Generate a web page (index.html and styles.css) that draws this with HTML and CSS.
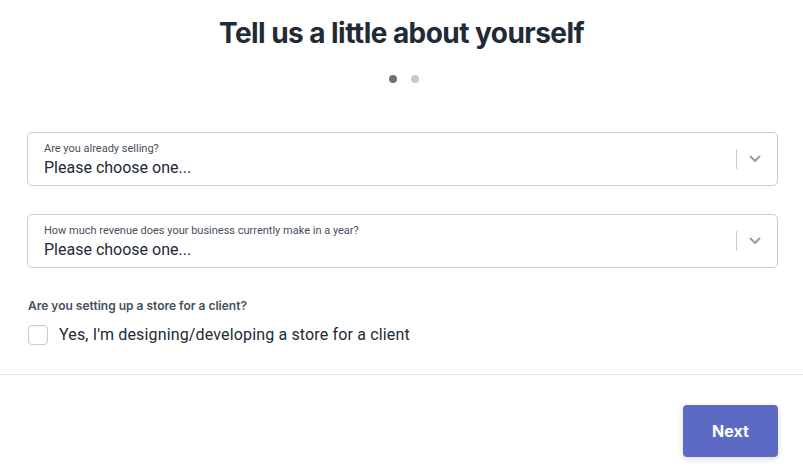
FILE: index.html
```html
<!DOCTYPE html>
<html lang="en">
<head>
<meta charset="utf-8">
<title>Tell us a little about yourself</title>
<link rel="stylesheet" href="styles.css">
</head>
<body>
<div class="page">
  <header class="head">
    <h1 class="title">Tell us a little about yourself</h1>
    <div class="dots"><span class="dot dot-active"></span><span class="dot"></span></div>
  </header>
  <form class="form">
    <div class="select">
      <div class="select-text">
        <span class="select-label">Are you already selling?</span>
        <span class="select-value">Please choose one...</span>
      </div>
      <div class="select-arrow">
        <span class="sep"></span>
        <svg class="chev" width="12" height="8" viewBox="0 0 12 8"><path d="M1.5 1.5 L6 6 L10.5 1.5" fill="none" stroke="#919eab" stroke-width="2" stroke-linecap="round" stroke-linejoin="round"/></svg>
      </div>
    </div>
    <div class="select">
      <div class="select-text">
        <span class="select-label">How much revenue does your business currently make in a year?</span>
        <span class="select-value">Please choose one...</span>
      </div>
      <div class="select-arrow">
        <span class="sep"></span>
        <svg class="chev" width="12" height="8" viewBox="0 0 12 8"><path d="M1.5 1.5 L6 6 L10.5 1.5" fill="none" stroke="#919eab" stroke-width="2" stroke-linecap="round" stroke-linejoin="round"/></svg>
      </div>
    </div>
    <div class="client">
      <div class="client-q">Are you setting up a store for a client?</div>
      <label class="check">
        <span class="box"></span>
        <span class="check-text">Yes, I'm designing/developing a store for a client</span>
      </label>
    </div>
  </form>
  <footer class="foot">
    <button class="next" type="button">Next</button>
  </footer>
</div>
</body>
</html>
```
FILE: styles.css
```css
* { box-sizing: border-box; }
html, body { margin: 0; padding: 0; background: #fff; }
body {
  font-family: Roboto, "Liberation Sans", Arial, sans-serif;
  color: #212b36;
}
.page { width: 803px; }
.head {
  display: flex;
  flex-direction: column;
  align-items: center;
  padding-top: 15px;
}
.title {
  margin: 0;
  font-family: Inter, "Liberation Sans", sans-serif;
  font-size: 28px;
  line-height: 36px;
  font-weight: 700;
  letter-spacing: -0.55px;
  color: #212b36;
}
.dots {
  display: flex;
  gap: 14px;
  margin-top: 24px;
  margin-left: 4px;
}
.dot {
  width: 8px;
  height: 8px;
  border-radius: 50%;
  background: #c9c9c9;
}
.dot-active { background: #707070; }
.form {
  padding: 49px 25px 0 27px;
  display: flex;
  flex-direction: column;
}
.select {
  height: 54px;
  border: 1px solid #c4cdd5;
  border-radius: 5px;
  display: flex;
  align-items: center;
  margin-bottom: 28px;
}
.select-text {
  flex: 1;
  display: flex;
  flex-direction: column;
  padding-left: 16px;
  padding-top: 2px;
}
.select-label {
  font-size: 11px;
  line-height: 14px;
  color: #454f5b;
}
.select-value {
  font-size: 16px;
  line-height: 21px;
  margin-top: 1px;
  color: #212b36;
}
.select-arrow {
  display: flex;
  align-items: center;
  padding-right: 16px;
}
.sep {
  width: 1px;
  height: 20px;
  background: #c4cdd5;
  margin-right: 12px;
}
.chev { display: block; }
.client { margin-top: 3px; }
.client-q {
  font-family: Inter, "Liberation Sans", sans-serif;
  font-size: 12px;
  font-weight: 600;
  line-height: 16px;
  color: #454f5b;
  margin-left: 1px;
  margin-top: -1px;
}
.check {
  display: flex;
  align-items: center;
  gap: 11px;
  margin-top: 11px;
  margin-left: 1px;
}
.box {
  width: 20px;
  height: 20px;
  border: 1px solid #c4cdd5;
  border-radius: 4px;
  background: #fff;
  box-shadow: inset 0 1px 2px rgba(0,0,0,0.05);
}
.check-text {
  font-size: 16px;
  line-height: 20px;
  letter-spacing: 0.15px;
  color: #212b36;
}
.foot {
  margin-top: 29px;
  border-top: 1px solid #e6e6e6;
  display: flex;
  justify-content: flex-end;
  padding: 30px 25px 12px 0;
}
.next {
  width: 95px;
  height: 52px;
  border: 0;
  border-radius: 4px;
  background: #5c6ac4;
  color: #fff;
  font-family: Inter, "Liberation Sans", sans-serif;
  font-size: 16px;
  font-weight: 700;
  box-shadow: 0 2px 6px rgba(0,0,0,0.15);
}
```
